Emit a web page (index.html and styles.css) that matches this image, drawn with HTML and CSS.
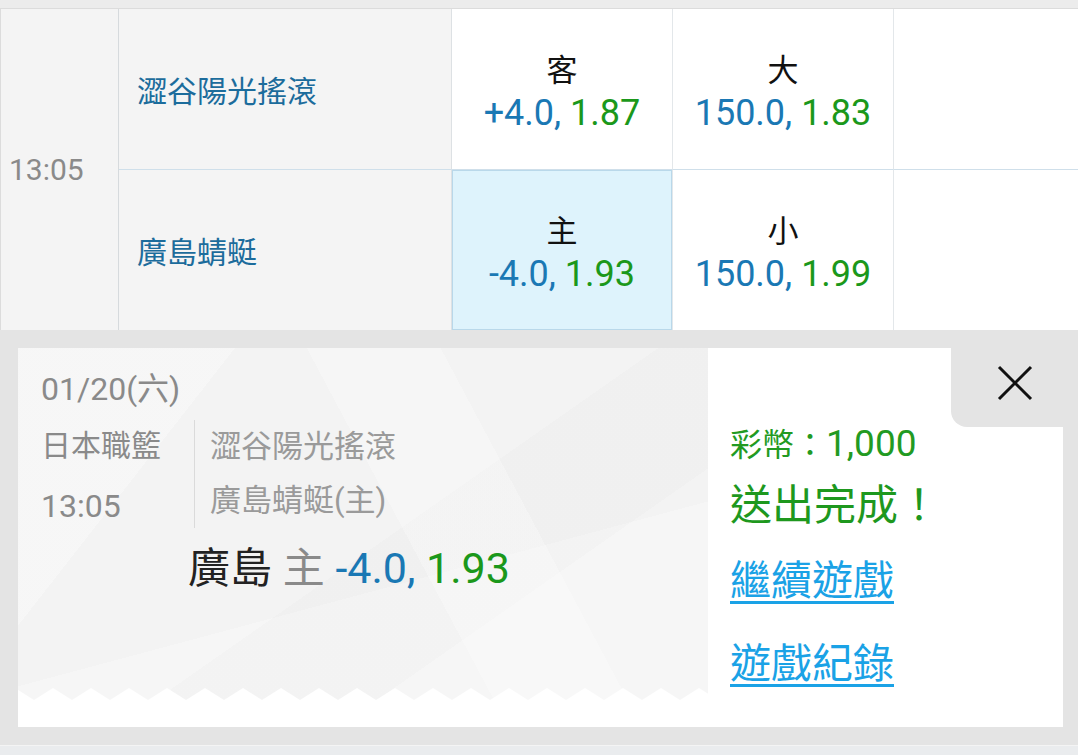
FILE: index.html
```html
<!DOCTYPE html>
<html lang="zh-Hant">
<head>
    <meta charset="UTF-8">
    <meta name="viewport" content="width=device-width, initial-scale=1.0">
    <title>投注結果</title>
    <link rel="stylesheet" href="styles.css">
</head>
<body>

    <div class="topbar"></div>

    <!-- Odds table -->
    <div class="odds-table">
        <div class="time-cell">13:05</div>

        <div class="team-cell first-row">澀谷陽光搖滾</div>
        <div class="odds-cell first-row">
            <span class="side">客</span>
            <span class="odds"><span class="line">+4.0,</span> <span class="price">1.87</span></span>
        </div>
        <div class="odds-cell first-row">
            <span class="side">大</span>
            <span class="odds"><span class="line">150.0,</span> <span class="price">1.83</span></span>
        </div>
        <div class="odds-cell first-row last"></div>

        <div class="team-cell">廣島蜻蜓</div>
        <div class="odds-cell selected">
            <span class="side">主</span>
            <span class="odds"><span class="line">-4.0,</span> <span class="price">1.93</span></span>
        </div>
        <div class="odds-cell">
            <span class="side">小</span>
            <span class="odds"><span class="line">150.0,</span> <span class="price">1.99</span></span>
        </div>
        <div class="odds-cell last"></div>
    </div>

    <!-- Result dialog -->
    <div class="result-wrap">
        <div class="result-card">
            <div class="ticket">
                <div class="ticket-body">
                    <div class="ticket-date">01/20(六)</div>
                    <div class="ticket-info">
                        <div class="league">
                            <div>日本職籃</div>
                            <div class="num">13:05</div>
                        </div>
                        <div class="teams">
                            <div>澀谷陽光搖滾</div>
                            <div>廣島蜻蜓(主)</div>
                        </div>
                    </div>
                    <div class="pick">
                        <span class="pick-team">廣島</span>
                        <span class="pick-side">主</span>
                        <span class="line">-4.0,</span> <span class="price">1.93</span>
                    </div>
                </div>
                <svg class="zigzag" width="100%" height="12">
                    <defs>
                        <pattern id="teeth" x="16" y="0" width="38" height="12" patternUnits="userSpaceOnUse">
                            <path d="M0 12 L19 0 L38 12 Z" fill="#fff"/>
                        </pattern>
                    </defs>
                    <rect width="100%" height="12" fill="url(#teeth)"/>
                </svg>
                <div class="ticket-foot"></div>
            </div>

            <div class="status">
                <div class="close-btn">
                    <svg width="36" height="36" viewBox="0 0 36 36">
                        <path d="M2 2 L34 34 M34 2 L2 34" stroke="#111" stroke-width="3" fill="none"/>
                    </svg>
                </div>
                <div class="coins">彩幣：<span class="coins-num">1,000</span></div>
                <div class="done">送出完成！</div>
                <a class="link first" href="#">繼續遊戲</a>
                <a class="link" href="#">遊戲紀錄</a>
            </div>
        </div>
    </div>

    <div class="bottombar"></div>

</body>
</html>
```

FILE: styles.css
```css
* {
    margin: 0;
    padding: 0;
    box-sizing: border-box;
    font-family: 'Roboto', 'Noto Sans CJK TC', sans-serif;
}
body {
    background: #e4e4e4;
    width: 1078px;
    height: 755px;
    overflow: hidden;
}
.topbar {
    height: 9px;
    background: #ececec;
    border-bottom: 1px solid #dcdcdc;
}

/* odds table */
.odds-table {
    display: grid;
    grid-template-columns: 119px 333px 221px 221px 1fr;
    grid-template-rows: 161px 160px;
}
.time-cell {
    grid-row: span 2;
    background: #f4f4f4;
    border-left: 1px solid #dcdcdc;
    border-right: 1px solid #d6dadd;
    display: flex;
    align-items: center;
    padding-left: 8px;
    font-size: 30px;
    color: #8a8a8a;
}
.team-cell {
    background: #f4f4f4;
    border-right: 1px solid #dde1e4;
    display: flex;
    align-items: center;
    padding-left: 18px;
    font-size: 30px;
    color: #1c6c9c;
}
.first-row {
    border-bottom: 1px solid #cfdfea;
}
.odds-cell {
    background: #fff;
    border-right: 1px solid #e3e7ea;
    display: flex;
    flex-direction: column;
    align-items: center;
    padding-top: 42px;
}
.odds-cell.last {
    border-right: none;
}
.odds-cell.selected {
    background: #def3fc;
    box-shadow: inset 0 0 0 1px #b9d8ea;
}
.side {
    font-size: 31px;
    line-height: 40px;
    color: #111;
}
.odds {
    font-size: 36px;
    line-height: 44px;
}
.line {
    color: #1a78b4;
}
.price {
    color: #1b981b;
}

/* result dialog */
.result-wrap {
    padding: 18px 15px 18px 18px;
}
.result-card {
    display: flex;
    height: 379px;
}
.ticket {
    width: 690px;
    display: flex;
    flex-direction: column;
    background-color: #f3f3f3;
    background-image:
        linear-gradient(62deg, transparent 55%, rgba(255, 255, 255, 0.25) 55%, rgba(255, 255, 255, 0.25) 70%, transparent 70%),
        linear-gradient(128deg, rgba(255, 255, 255, 0.3) 22%, transparent 22%),
        linear-gradient(-35deg, transparent 30%, rgba(0, 0, 0, 0.012) 30%, rgba(0, 0, 0, 0.012) 48%, transparent 48%),
        linear-gradient(165deg, transparent 60%, rgba(255, 255, 255, 0.25) 60%);
}
.ticket-body {
    flex: 1;
    padding: 21px 0 0 23px;
    color: #8a8a8a;
}
.ticket-date {
    font-size: 32px;
    line-height: 40px;
}
.ticket-info {
    display: flex;
    align-items: flex-start;
    margin-top: 7px;
    font-size: 30px;
}
.league {
    width: 153px;
    line-height: 60px;
}
.league .num {
    font-size: 32px;
}
.teams {
    margin-top: 4px;
    border-left: 1px solid #dadada;
    padding-left: 15px;
    line-height: 54px;
    font-size: 31px;
    color: #9a9a9a;
}
.pick {
    margin: 7px 0 0 147px;
    line-height: 50px;
    font-size: 43px;
}
.pick-team {
    font-size: 42px;
    color: #222;
}
.pick-side {
    font-size: 42px;
    color: #8a8a8a;
}
.zigzag {
    display: block;
}
.ticket-foot {
    height: 27px;
    background: #fff;
}

.status {
    flex: 1;
    position: relative;
    background: #fff;
    padding: 76px 0 0 22px;
    display: flex;
    flex-direction: column;
    align-items: flex-start;
}
.close-btn {
    position: absolute;
    top: 0;
    right: 0;
    width: 112px;
    height: 79px;
    background: #e4e4e4;
    border-bottom-left-radius: 16px;
    padding: 17px 0 0 46px;
}
.close-btn svg {
    display: block;
}
.coins {
    font-size: 32px;
    line-height: 40px;
    color: #229a22;
}
.coins-num {
    font-size: 37px;
}
.done {
    margin-top: 15px;
    font-size: 42px;
    line-height: 52px;
    color: #1e981e;
}
.link {
    font-size: 41px;
    line-height: 50px;
    color: #1aa2e6;
    text-decoration: underline;
    text-decoration-thickness: 3px;
    text-underline-offset: 6px;
}
.link.first {
    margin-top: 24px;
}
.link + .link {
    margin-top: 33px;
}

.bottombar {
    height: 12px;
    border-top: 1px solid #f4f4f4;
    background: #eaecee;
}
```
